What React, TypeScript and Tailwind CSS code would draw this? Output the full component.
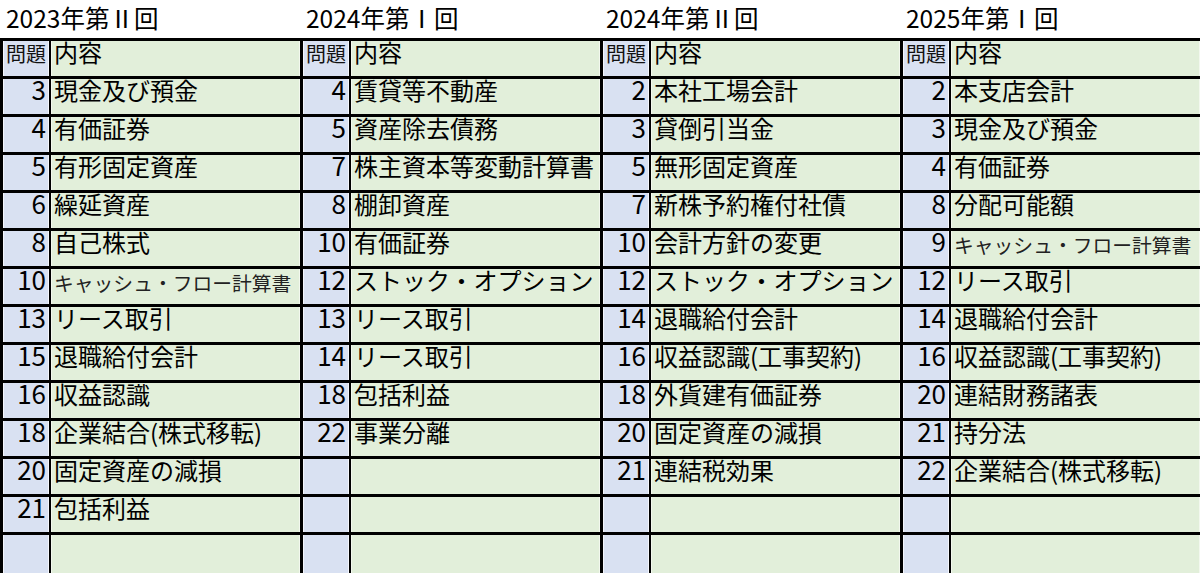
import React from "react";

type Row = [string, string, boolean?];
type Table = { title: string; rows: Row[] };

const tables: Table[] = [
  {
    title: "2023年第Ⅱ回",
    rows: [
      ["3", "現金及び預金"],
      ["4", "有価証券"],
      ["5", "有形固定資産"],
      ["6", "繰延資産"],
      ["8", "自己株式"],
      ["10", "キャッシュ・フロー計算書", true],
      ["13", "リース取引"],
      ["15", "退職給付会計"],
      ["16", "収益認識"],
      ["18", "企業結合(株式移転)"],
      ["20", "固定資産の減損"],
      ["21", "包括利益"],
      ["", ""],
    ],
  },
  {
    title: "2024年第Ⅰ回",
    rows: [
      ["4", "賃貸等不動産"],
      ["5", "資産除去債務"],
      ["7", "株主資本等変動計算書"],
      ["8", "棚卸資産"],
      ["10", "有価証券"],
      ["12", "ストック・オプション"],
      ["13", "リース取引"],
      ["14", "リース取引"],
      ["18", "包括利益"],
      ["22", "事業分離"],
      ["", ""],
      ["", ""],
      ["", ""],
    ],
  },
  {
    title: "2024年第Ⅱ回",
    rows: [
      ["2", "本社工場会計"],
      ["3", "貸倒引当金"],
      ["5", "無形固定資産"],
      ["7", "新株予約権付社債"],
      ["10", "会計方針の変更"],
      ["12", "ストック・オプション"],
      ["14", "退職給付会計"],
      ["16", "収益認識(工事契約)"],
      ["18", "外貨建有価証券"],
      ["20", "固定資産の減損"],
      ["21", "連結税効果"],
      ["", ""],
      ["", ""],
    ],
  },
  {
    title: "2025年第Ⅰ回",
    rows: [
      ["2", "本支店会計"],
      ["3", "現金及び預金"],
      ["4", "有価証券"],
      ["8", "分配可能額"],
      ["9", "キャッシュ・フロー計算書", true],
      ["12", "リース取引"],
      ["14", "退職給付会計"],
      ["16", "収益認識(工事契約)"],
      ["20", "連結財務諸表"],
      ["21", "持分法"],
      ["22", "企業結合(株式移転)"],
      ["", ""],
      ["", ""],
    ],
  },
];

function TableBlock({ t }: { t: Table }) {
  return (
    <div className="w-[300px] shrink-0 flex flex-col">
      <div className="h-[38px] pl-[6px] text-[24.5px] leading-[35px] whitespace-nowrap text-black">
        {t.title}
      </div>
      <div className="flex h-[38px] border-t-[3px] border-l-[3px] border-black">
        <div className="w-[46px] bg-[#d9e1f2] shadow-[inset_1px_0_0_#f4f6fc,inset_-1px_0_0_#f4f6fc] text-[20px] leading-[26px] text-center text-[#111] whitespace-nowrap">
          問題
        </div>
        <div className="flex-1 border-l-[2px] border-black bg-[#e2efda] shadow-[inset_1px_0_0_#f3f8ef,inset_-1px_0_0_#f3f8ef] pl-[3px] text-[24px] leading-[21px] text-black whitespace-nowrap">
          内容
        </div>
      </div>
      {t.rows.map((r, i) => (
        <div
          key={i}
          className={
            "flex shrink-0 border-t-[3px] border-l-[3px] border-black " +
            (i === t.rows.length - 1 ? "h-[41px]" : "h-[38px]")
          }
        >
          <div className="w-[46px] bg-[#d9e1f2] shadow-[inset_1px_0_0_#f4f6fc,inset_-1px_0_0_#f4f6fc] pr-[3px] text-right text-[26px] leading-[19px] text-black whitespace-nowrap">
            {r[0]}
          </div>
          <div className="flex-1 border-l-[2px] border-black bg-[#e2efda] shadow-[inset_1px_0_0_#f3f8ef,inset_-1px_0_0_#f3f8ef] pl-[3px] text-black whitespace-nowrap">
            {r[2] ? (
              <span className="block text-[19.8px] leading-[27px] text-[#222]">{r[1]}</span>
            ) : (
              <span className="block text-[24px] leading-[21px]">{r[1]}</span>
            )}
          </div>
        </div>
      ))}
    </div>
  );
}

export default function App() {
  return (
    <div className="w-[1200px] h-[573px] overflow-hidden bg-white flex font-['Noto_Sans_CJK_JP','Noto_Sans',sans-serif]">
      {tables.map((t, i) => (
        <TableBlock key={i} t={t} />
      ))}
    </div>
  );
}
